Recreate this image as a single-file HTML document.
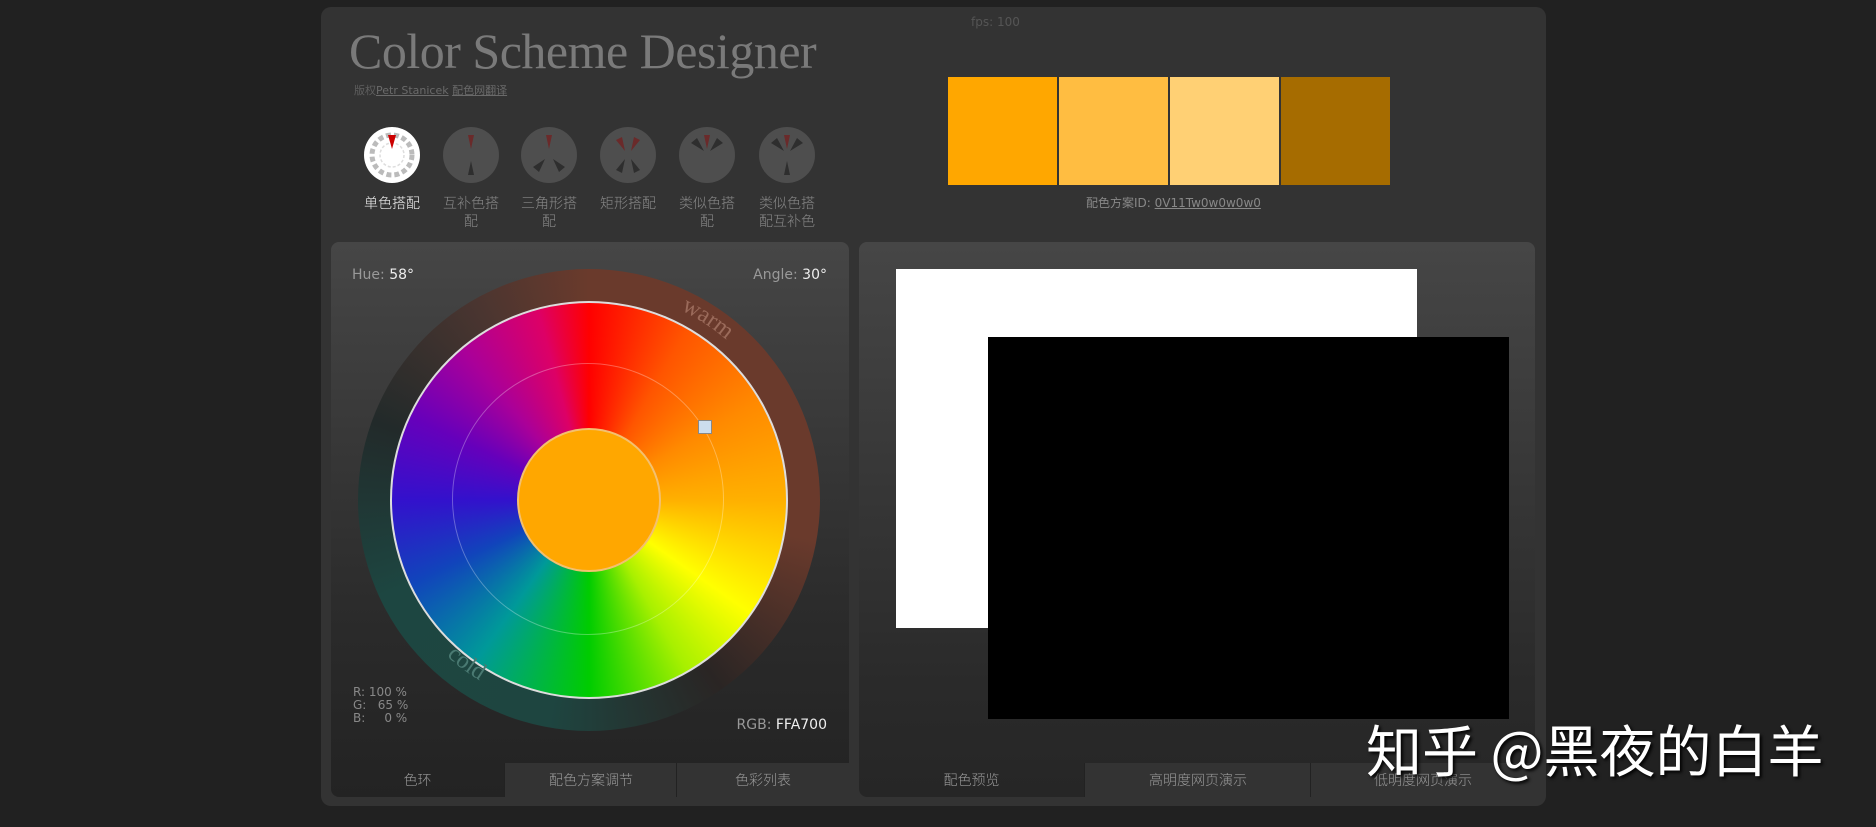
<!DOCTYPE html>
<html><head><meta charset="utf-8"><style>
body{margin:0;width:1876px;height:827px;background:#212121;position:relative;overflow:hidden;font-family:"DejaVu Sans","Liberation Sans","Noto Sans CJK SC",sans-serif}
.a{position:absolute}
#main{left:321px;top:7px;width:1225px;height:799px;background:#333;border-radius:10px}
.title{left:349px;top:22px;font-family:"Liberation Serif","DejaVu Serif",serif;font-size:50px;color:#7a7a7a;letter-spacing:-0.5px}
.sub{left:354px;top:82px;font-size:11px;color:#5e5e5e}
.sub u{color:#6a6a6a}
.ic{width:56px;height:56px;border-radius:50%;background:#4e4e4e;top:127px}
.ic.sel{background:#fff}
.lbl{top:194px;width:80px;text-align:center;font-size:14px;line-height:18px;color:#888;font-family:"Noto Sans CJK SC",sans-serif;font-weight:300}
.sw{top:77px;height:108px;width:109px}
#lp{left:331px;top:242px;width:518px;height:555px;border-radius:8px;background:linear-gradient(#464646,#2a2a2a 70%,#232323)}
#rp{left:859px;top:242px;width:676px;height:555px;border-radius:8px;background:linear-gradient(#464646,#2a2a2a 80%,#262626)}
.tab{height:34px;line-height:34px;text-align:center;font-size:14px;color:#999;background:#333;border-left:1px solid #222;font-family:"Noto Sans CJK SC",sans-serif;font-weight:300}
.t{font-size:14px;color:#999}
.t b{color:#eee;font-weight:normal}
</style></head><body>
<div id="main" class="a"></div>
<div class="a title">Color Scheme Designer</div>
<div class="a sub">版权<u>Petr Stanicek</u> <u>配色网翻译</u></div>
<div class="a" style="left:971px;top:15px;font-size:12px;color:#555">fps: 100</div>

<div class="a ic sel" style="left:364px"><svg width="56" height="56"><circle cx="28" cy="28" r="20" fill="none" stroke="#bbb" stroke-width="5" stroke-dasharray="5 3"/><circle cx="28" cy="28" r="12" fill="none" stroke="#ddd" stroke-width="1.5" stroke-dasharray="3 2"/><path d="M24 8 L32 8 L28 22Z" fill="#c00"/></svg></div>
<div class="a ic" style="left:443px"><svg width="56" height="56"><path d="M25 8 L31 8 L28 22Z" fill="#6a2a2a"/><path d="M25 48 L31 48 L28 34Z" fill="#2e2e2e"/></svg></div>
<div class="a ic" style="left:521px"><svg width="56" height="56"><path d="M25 8 L31 8 L28 22Z" fill="#6a2a2a"/><path d="M12 40 L18 45 L24 32Z M44 40 L38 45 L32 32Z" fill="#2e2e2e"/></svg></div>
<div class="a ic" style="left:600px"><svg width="56" height="56"><path d="M16 13 L22 10 L25 24Z M40 13 L34 10 L31 24Z" fill="#6a2a2a"/><path d="M16 43 L22 46 L25 32Z M40 43 L34 46 L31 32Z" fill="#2e2e2e"/></svg></div>
<div class="a ic" style="left:679px"><svg width="56" height="56"><path d="M25 8 L31 8 L28 22Z" fill="#6a2a2a"/><path d="M12 16 L18 11 L25 24Z M44 16 L38 11 L31 24Z" fill="#2e2e2e"/></svg></div>
<div class="a ic" style="left:759px"><svg width="56" height="56"><path d="M25 8 L31 8 L28 22Z" fill="#6a2a2a"/><path d="M12 16 L18 11 L25 24Z M44 16 L38 11 L31 24Z M25 48 L31 48 L28 34Z" fill="#2e2e2e"/></svg></div>
<div class="a lbl" style="left:352px;color:#eee">单色搭配</div>
<div class="a lbl" style="left:431px">互补色搭<br>配</div>
<div class="a lbl" style="left:509px">三角形搭<br>配</div>
<div class="a lbl" style="left:588px">矩形搭配</div>
<div class="a lbl" style="left:667px">类似色搭<br>配</div>
<div class="a lbl" style="left:747px">类似色搭<br>配互补色</div>

<div class="a sw" style="left:948px;background:#FFA700"></div>
<div class="a sw" style="left:1059px;background:#FFBD41"></div>
<div class="a sw" style="left:1170px;background:#FFD074"></div>
<div class="a sw" style="left:1281px;background:#A66C00"></div>
<div class="a" style="left:1086px;top:194px;font-size:12px;color:#888">配色方案ID: <u>0V11Tw0w0w0w0</u></div>

<div id="lp" class="a"></div>
<div class="a" style="left:358px;top:269px;width:462px;height:462px;border-radius:50%;background:conic-gradient(#6a3a2c 0deg,#6a3a2c 100deg,#2a2524 145deg,#1e4540 190deg,#1d4641 245deg,#222a2a 290deg,#4a3530 330deg,#6a3a2c 360deg)"></div>
<div class="a" style="left:390px;top:301px;width:398px;height:398px;border-radius:50%;background:#ddd"></div>
<div class="a" style="left:392px;top:303px;width:394px;height:394px;border-radius:50%;background:conic-gradient(#ff0000 0deg,#ff5500 30deg,#ff8a00 60deg,#ffb000 90deg,#ffdd00 110deg,#ffff00 125deg,#a8f000 150deg,#00cc00 180deg,#009999 215deg,#1144bb 245deg,#3311cc 270deg,#6600bb 295deg,#aa0099 320deg,#dd0066 345deg,#ff0000 360deg)"></div>
<div class="a" style="left:452px;top:363px;width:272px;height:272px;border-radius:50%;border:1px solid rgba(255,255,255,.3);box-sizing:border-box"></div>
<div class="a" style="left:517px;top:428px;width:144px;height:144px;border-radius:50%;background:#FFA700;border:2px solid #f3c070;box-sizing:border-box"></div>
<div class="a" style="left:698px;top:420px;width:12px;height:12px;background:#cde;border:1px solid #888"></div>
<svg class="a" style="left:358px;top:269px" width="462" height="462"><defs><path id="wa" d="M231 20 A211 211 0 0 1 442 231"/><path id="co" d="M20 231 A211 211 0 0 0 231 442"/></defs>
<text font-family="Liberation Serif,serif" font-size="24" fill="#9a6a5a"><textPath href="#wa" startOffset="95">warm</textPath></text>
<text font-family="Liberation Serif,serif" font-size="24" fill="#4a7a72"><textPath href="#co" startOffset="175">cold</textPath></text></svg>
<div class="a t" style="left:352px;top:267px">Hue: <b>58°</b></div>
<div class="a t" style="right:1049px;top:267px">Angle: <b>30°</b></div>
<div class="a" style="left:353px;top:686px;font-size:12px;line-height:13px;color:#888;white-space:pre">R: 100 %
G:   65 %
B:     0 %</div>
<div class="a t" style="right:1049px;top:717px">RGB: <b>FFA700</b></div>
<div class="a tab" style="left:331px;top:763px;width:173px;background:transparent;border:none">色环</div>
<div class="a tab" style="left:504px;top:763px;width:172px">配色方案调节</div>
<div class="a tab" style="left:676px;top:763px;width:172px">色彩列表</div>

<div id="rp" class="a"></div>
<div class="a" style="left:896px;top:269px;width:521px;height:359px;background:#fff"></div>
<div class="a" style="left:988px;top:337px;width:521px;height:382px;background:#000"></div>
<div class="a tab" style="left:859px;top:763px;width:225px;background:transparent;border:none">配色预览</div>
<div class="a tab" style="left:1084px;top:763px;width:226px">高明度网页演示</div>
<div class="a tab" style="left:1310px;top:763px;width:224px">低明度网页演示</div>
<div class="a" style="left:1366px;top:708px;font-size:56px;color:#fff;text-shadow:2px 2px 3px #000;font-family:'Noto Sans CJK SC',sans-serif;white-space:nowrap">知乎 @黑夜的白羊</div>
</body></html>
